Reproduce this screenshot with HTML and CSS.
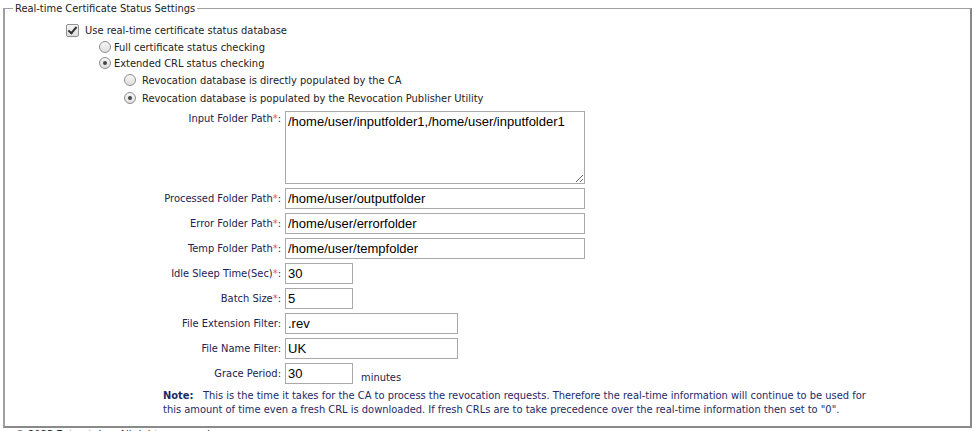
FILE: index.html
```html
<!DOCTYPE html>
<html lang="en">
<head>
  <meta charset="UTF-8">
  <title>Real-time Certificate Status Settings</title>
  <link rel="stylesheet" href="styles.css">
</head>
<body>
  <div class="page">
    <fieldset class="settings">
      <legend>Real-time Certificate Status Settings</legend>

      <div class="options">
        <label class="opt check-row">
          <input type="checkbox" class="chk" checked>
          Use real-time certificate status database
        </label>
        <label class="opt lvl1">
          <input type="radio" name="mode" class="rad">
          Full certificate status checking
        </label>
        <label class="opt lvl1">
          <input type="radio" name="mode" class="rad" checked>
          Extended CRL status checking
        </label>
        <label class="opt lvl2">
          <input type="radio" name="source" class="rad">
          Revocation database is directly populated by the CA
        </label>
        <label class="opt lvl2">
          <input type="radio" name="source" class="rad" checked>
          Revocation database is populated by the Revocation Publisher Utility
        </label>
      </div>

      <div class="form">
        <label class="lbl lbl-top">Input Folder Path<span class="req">*</span>:</label>
        <div><textarea class="fld fld-area" spellcheck="false">/home/user/inputfolder1,/home/user/inputfolder1</textarea></div>

        <label class="lbl">Processed Folder Path<span class="req">*</span>:</label>
        <div><input class="fld fld-long" type="text" value="/home/user/outputfolder"></div>

        <label class="lbl">Error Folder Path<span class="req">*</span>:</label>
        <div><input class="fld fld-long" type="text" value="/home/user/errorfolder"></div>

        <label class="lbl">Temp Folder Path<span class="req">*</span>:</label>
        <div><input class="fld fld-long" type="text" value="/home/user/tempfolder"></div>

        <label class="lbl">Idle Sleep Time(Sec)<span class="req">*</span>:</label>
        <div><input class="fld fld-short" type="text" value="30"></div>

        <label class="lbl">Batch Size<span class="req">*</span>:</label>
        <div><input class="fld fld-short" type="text" value="5"></div>

        <label class="lbl">File Extension Filter:</label>
        <div><input class="fld fld-mid" type="text" value=".rev"></div>

        <label class="lbl">File Name Filter:</label>
        <div><input class="fld fld-mid" type="text" value="UK"></div>

        <label class="lbl">Grace Period:</label>
        <div class="with-unit"><input class="fld fld-short" type="text" value="30"><span class="unit">minutes</span></div>
      </div>

      <p class="note">
        <b>Note:</b>&nbsp;&nbsp; This is the time it takes for the CA to process the revocation requests. Therefore the real-time information will continue to be used for this amount of time even a fresh CRL is downloaded. If fresh CRLs are to take precedence over the real-time information then set to "0".
      </p>
    </fieldset>
    <div class="footer">&copy; 2023 Entrust, Inc. All rights reserved.</div>
  </div>
</body>
</html>
```

FILE: styles.css
```css
body {
  margin: 0;
  background: #fff;
  font-family: "DejaVu Sans Condensed", "DejaVu Sans", sans-serif;
  font-size: 11px;
  color: #222;
}
.page {
  padding: 0 2px 0 3px;
}
.settings {
  margin: 2px 0 0 0;
  padding: 7px 0 9px 0;
  border: 1px solid #a0a0a0;
  border-right: 2px solid #8a8a8a;
  border-bottom: 2px solid #8a8a8a;
  border-left: 2px solid #a0a0a0;
  min-width: 0;
}
.settings legend {
  margin-left: 8px;
  padding: 0 2px;
  font-size: 11px;
  color: #222;
}
.options {
  display: flex;
  flex-direction: column;
}
.opt {
  display: flex;
  align-items: center;
  white-space: nowrap;
  color: #222;
}
.check-row {
  height: 17px;
  padding-left: 61px;
}
.lvl1 {
  height: 16px;
  padding-left: 94px;
}
.lvl2 {
  height: 18px;
  padding-left: 119px;
}

/* checkbox / radio drawn in the old grey windows style */
.chk, .rad {
  appearance: none;
  -webkit-appearance: none;
  margin: 0;
  flex: none;
  border: 1px solid #8e8f8f;
  background: linear-gradient(#f6f6f6, #dedede);
  position: relative;
}
.chk {
  width: 13px;
  height: 13px;
  margin-right: 6px;
  border-radius: 2px;
}
.chk:checked::after {
  content: "";
  position: absolute;
  left: 3px;
  top: 0px;
  width: 3px;
  height: 7px;
  border: solid #333;
  border-width: 0 2px 2px 0;
  transform: rotate(40deg);
}
.rad {
  width: 12px;
  height: 12px;
  border-radius: 50%;
  margin-right: 3px;
}
.lvl2 .rad {
  margin-right: 6px;
}
.rad:checked::after {
  content: "";
  position: absolute;
  left: 3px;
  top: 3px;
  width: 4px;
  height: 4px;
  border-radius: 50%;
  background: #444;
}

.form {
  display: grid;
  grid-template-columns: 276px auto;
  column-gap: 4px;
  row-gap: 4px;
  margin-top: 4px;
  align-items: center;
}
.lbl {
  text-align: right;
  color: #222250;
  white-space: nowrap;
}
.lbl-top {
  align-self: start;
  padding-top: 1px;
}
.req {
  color: #e0556a;
}
.fld {
  display: block;
  box-sizing: border-box;
  height: 21px;
  padding: 1px 2px;
  border: 1px solid #a9a9a9;
  font-family: "Liberation Sans", Arial, sans-serif;
  font-size: 13px;
  color: #000;
  background: #fff;
}
.fld-area {
  width: 300px;
  height: 73px;
  resize: both;
  line-height: 16px;
  padding-top: 2px;
}
.fld-long {
  width: 300px;
}
.fld-mid {
  width: 173px;
}
.fld-short {
  width: 68px;
}
.with-unit {
  display: flex;
  align-items: flex-end;
}
.unit {
  margin-left: 8px;
  color: #222250;
}
.note {
  margin: 5px 0 0 158px;
  width: 720px;
  line-height: 14px;
  color: #1e2a68;
}
.note b {
  color: #1e2a68;
}
.footer {
  margin: 0 0 0 12px;
  color: #222;
  font-size: 11px;
}
```
